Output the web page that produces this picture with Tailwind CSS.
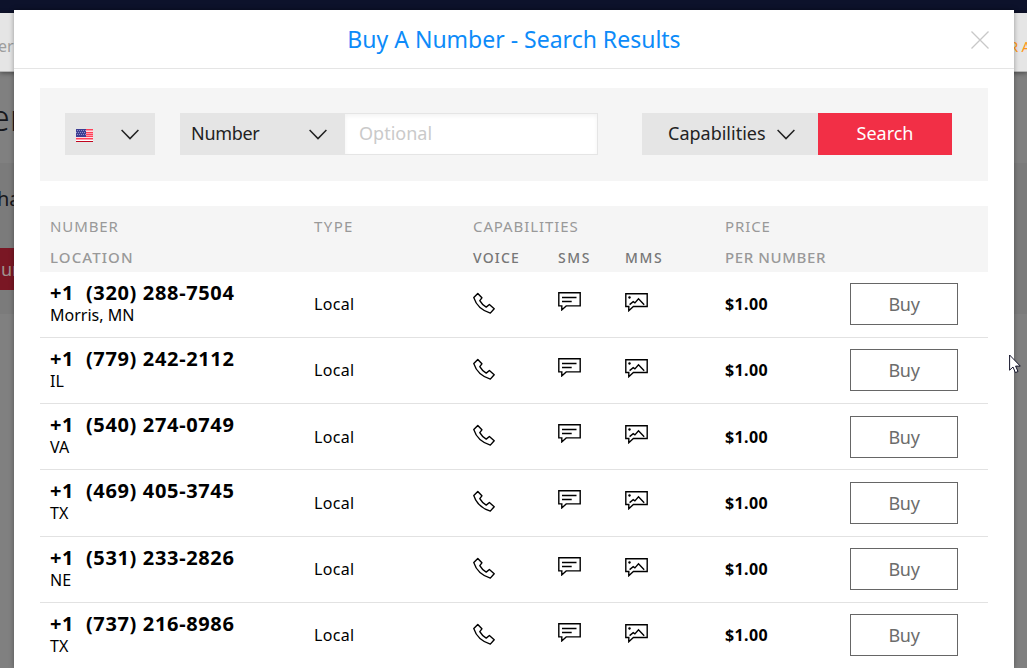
<!DOCTYPE html>
<html lang="en">
<head>
<meta charset="utf-8">
<title>Buy A Number</title>
<script src="https://cdn.jsdelivr.net/npm/@tailwindcss/browser@4"></script>
</head>
<body class="relative h-[668px] w-[1027px] overflow-hidden bg-[#808080] font-['Noto_Sans',sans-serif] text-black">

<!-- Dimmed page behind the dialog -->
<div class="flex h-full flex-col">
  <div class="h-[13px] shrink-0 bg-[#0d122b]"></div>
  <div class="relative flex h-[59px] shrink-0 items-center justify-between border-b border-[#b5b5b5] bg-[#e5e5e5] pt-2 shadow-[0_1px_5px_rgba(0,0,0,0.45)]">
    <span class="-ml-[2px] text-[16px] text-[#9d9d9d]">er</span>
    <span class="-mr-[7px] text-[15px] tracking-[3px] text-[#ff9a1a]">RA</span>
  </div>
  <div class="flex h-[91px] shrink-0 items-center"><span class="-ml-[10px] text-[36px] font-light text-[#16171c]">er</span></div>
  <div class="flex h-[151px] shrink-0 flex-col items-start bg-[#7b7b7b] pt-[22px]">
    <span class="-ml-[3px] h-[63px] text-[20px] leading-[28px] text-[#16171c]">ha</span>
    <div class="flex h-[42px] w-10 items-center bg-[#7a1724] pl-[1px] text-[18px] text-[#a0928f]">um</div>
  </div>
</div>

<!-- Dialog -->
<div class="absolute top-[10px] left-[14px] h-[658px] w-[1000px] overflow-hidden bg-white shadow-[0_0_5px_rgba(0,0,0,0.35)]">
  <header class="relative flex h-[59px] items-center justify-center border-b border-[#e5e5e5]">
    <h1 class="text-[23px] leading-[30px] text-[#0d8bf9]">Buy A Number - Search Results</h1>
    <svg class="absolute top-[21px] right-[25px] size-[18px]" viewBox="0 0 18 18" fill="none" stroke="#c8c8c8" stroke-width="1.3"><path d="M.5.5l17 17M17.5.5l-17 17"/></svg>
  </header>

  <div class="px-[26px] pt-[19px]">
    <div class="flex h-[93px] bg-[#f5f5f5] pt-[25px] pl-[25px] text-[18px] leading-[41px] text-[#222]">
      <div class="flex h-[42px] w-[90px] items-center justify-between bg-[#e5e5e5] pr-[16px] pl-[11px]">
        <svg class="mt-[3px] h-[13px] w-[17px]" viewBox="0 0 17 13" shape-rendering="crispEdges">
          <path fill="#ff9aa8" d="M0 0h17v13H0z"/><path fill="#ff4058" d="M0 0h17v1H0zM0 3h17v1H0zM0 5h17v1H0zM0 7h17v1H0zM0 9h17v1H0z"/><path fill="#ffdbe0" d="M0 2h17v1H0zM0 8h17v1H0z"/><path fill="#fff" d="M0 11h17v1H0z"/><path fill="#c0051e" d="M0 12h17v1H0z"/>
          <path fill="#3e3f94" d="M0 0h10v8H0z"/><path stroke="#8f90c4" stroke-dasharray="1 1" d="M1 1.5h9M0 3.5h10M1 5.5h9"/>
        </svg>
        <svg class="h-[11px] w-[18px]" viewBox="0 0 18 11" fill="none" stroke="#222" stroke-width="1.5"><path d="M.6 1L9 9.6 17.4 1"/></svg>
      </div>
      <div class="ml-[25px] flex h-[42px] w-[164px] items-center justify-between bg-[#e5e5e5] pr-[16px] pl-[11px]">
        <span class="-mt-px tracking-[-0.3px]">Number</span>
        <svg class="mr-px h-[11px] w-[18px]" viewBox="0 0 18 11" fill="none" stroke="#222" stroke-width="1.5"><path d="M.6 1L9 9.6 17.4 1"/></svg>
      </div>
      <div class="h-[42px] w-[254px] border border-[#e5e5e5] bg-white pl-[14px] leading-[39px] text-[#cacaca] shadow-[inset_0_2px_4px_rgba(0,0,0,0.05)]">Optional</div>
      <div class="ml-[44px] flex h-[42px] w-[176px] items-center bg-[#e5e5e5] pl-[26px]">
        <span class="-mt-px w-[98px]">Capabilities</span>
        <svg class="ml-[11px] h-[11px] w-[18px]" viewBox="0 0 18 11" fill="none" stroke="#222" stroke-width="1.5"><path d="M.6 1L9 9.6 17.4 1"/></svg>
      </div>
      <div class="h-[42px] w-[134px] bg-[#f22f46] text-center text-white">Search</div>
    </div>

    <div class="mt-[25px] grid h-[66px] grid-cols-[264px_159px_85px_67px_100px_1fr] grid-rows-[31px_31px] bg-[#f5f5f5] pt-[5px] pl-[10px] text-[15px] leading-[31px] tracking-[0.9px] whitespace-nowrap text-[#999]">
      <span>NUMBER</span><span class="tracking-[1.4px]">TYPE</span><span class="col-span-3">CAPABILITIES</span><span>PRICE</span>
      <span class="font-medium tracking-[1.1px]">LOCATION</span><span></span>
      <span class="text-[14px] font-medium tracking-[1.2px] text-[#777]">VOICE</span>
      <span class="text-[14px] font-medium tracking-[1.6px] text-[#777]">SMS</span>
      <span class="text-[14px] font-medium tracking-[1.6px] text-[#777]">MMS</span>
      <span class="font-medium tracking-[0.6px]">PER NUMBER</span>
    </div>
    <div id="rows"></div>
  </div>
</div>

<!-- Mouse pointer -->
<svg class="absolute top-[354px] left-[1009px] h-[20px] w-[13px]" viewBox="0 0 13 20" fill="#fff" stroke="#14142a" stroke-width="1"><path d="M.6 1v15.2l3.4-3.2 2.4 5.6 2.6-1.1-2.4-5.4h4.7z"/></svg>

<template id="row">
  <div class="flex h-[66.15px] border-b border-[#e2e2e2] pl-[10px]">
    <div class="w-[264px] pt-[8px]">
      <div class="num text-[20px] leading-[26px] font-bold tracking-[0.65px] whitespace-pre"></div>
      <div class="loc text-[16px] leading-[19px]"></div>
    </div>
    <div class="mt-[.25px] w-[159px] text-[16px] leading-[65px] tracking-[0.3px]">Local</div>
    <svg class="mt-[20px] mr-[63px] h-[23px] w-[22px]" viewBox="0 0 22 23" fill="none" stroke="#000" stroke-width="1.4" stroke-linejoin="round"><path d="M.8 5.6L4.8 1.4 8.9 5.8 6.8 8.6c1.5 2.7 3.7 4.9 6.4 6.5l3.2-2.6 4.8 4.2-3.9 4.4C9.4 18.6 3 12.6.8 5.6Z"/></svg>
    <svg class="mt-[20px] mr-[44px] h-[19px] w-[23px]" viewBox="0 0 23 19" fill="none" stroke="#000" stroke-width="1.4"><path d="M.8.8h21.4v13.1H8.2l-4.4 4v-4h-3zM4 5.5h14.5M4 9.5h9.7"/></svg>
    <svg class="mt-[21px] h-[19px] w-[23px]" viewBox="0 0 23 19" fill="none" stroke="#000" stroke-width="1.4"><path d="M.8.8h21.4v12.7H8.4l-4.6 4.2v-4.2h-3zM4.6 11.6l3.6-3 1.7 1.3 3.6-4.1 5.7 6"/><circle cx="4.5" cy="4.4" r="1" fill="#000" stroke-width=".6"/></svg>
    <div class="mt-[.25px] ml-[77px] w-[125px] text-[16px] leading-[65px] font-bold tracking-[0.4px]">$1.00</div>
    <div class="mt-[11.25px] h-[42px] w-[108px] border border-[#666] text-center text-[18px] leading-[40px] tracking-[-0.3px] text-[#6c6c6c]">Buy</div>
  </div>
</template>
<script>
const data = [
  ["+1  (320) 288-7504", "Morris, MN"],
  ["+1  (779) 242-2112", "IL"],
  ["+1  (540) 274-0749", "VA"],
  ["+1  (469) 405-3745", "TX"],
  ["+1  (531) 233-2826", "NE"],
  ["+1  (737) 216-8986", "TX"],
];
const tpl = document.getElementById("row");
for (const [num, loc] of data) {
  const r = tpl.content.cloneNode(true);
  r.querySelector(".num").textContent = num;
  r.querySelector(".loc").textContent = loc;
  document.getElementById("rows").append(r);
}
</script>
</body>
</html>
